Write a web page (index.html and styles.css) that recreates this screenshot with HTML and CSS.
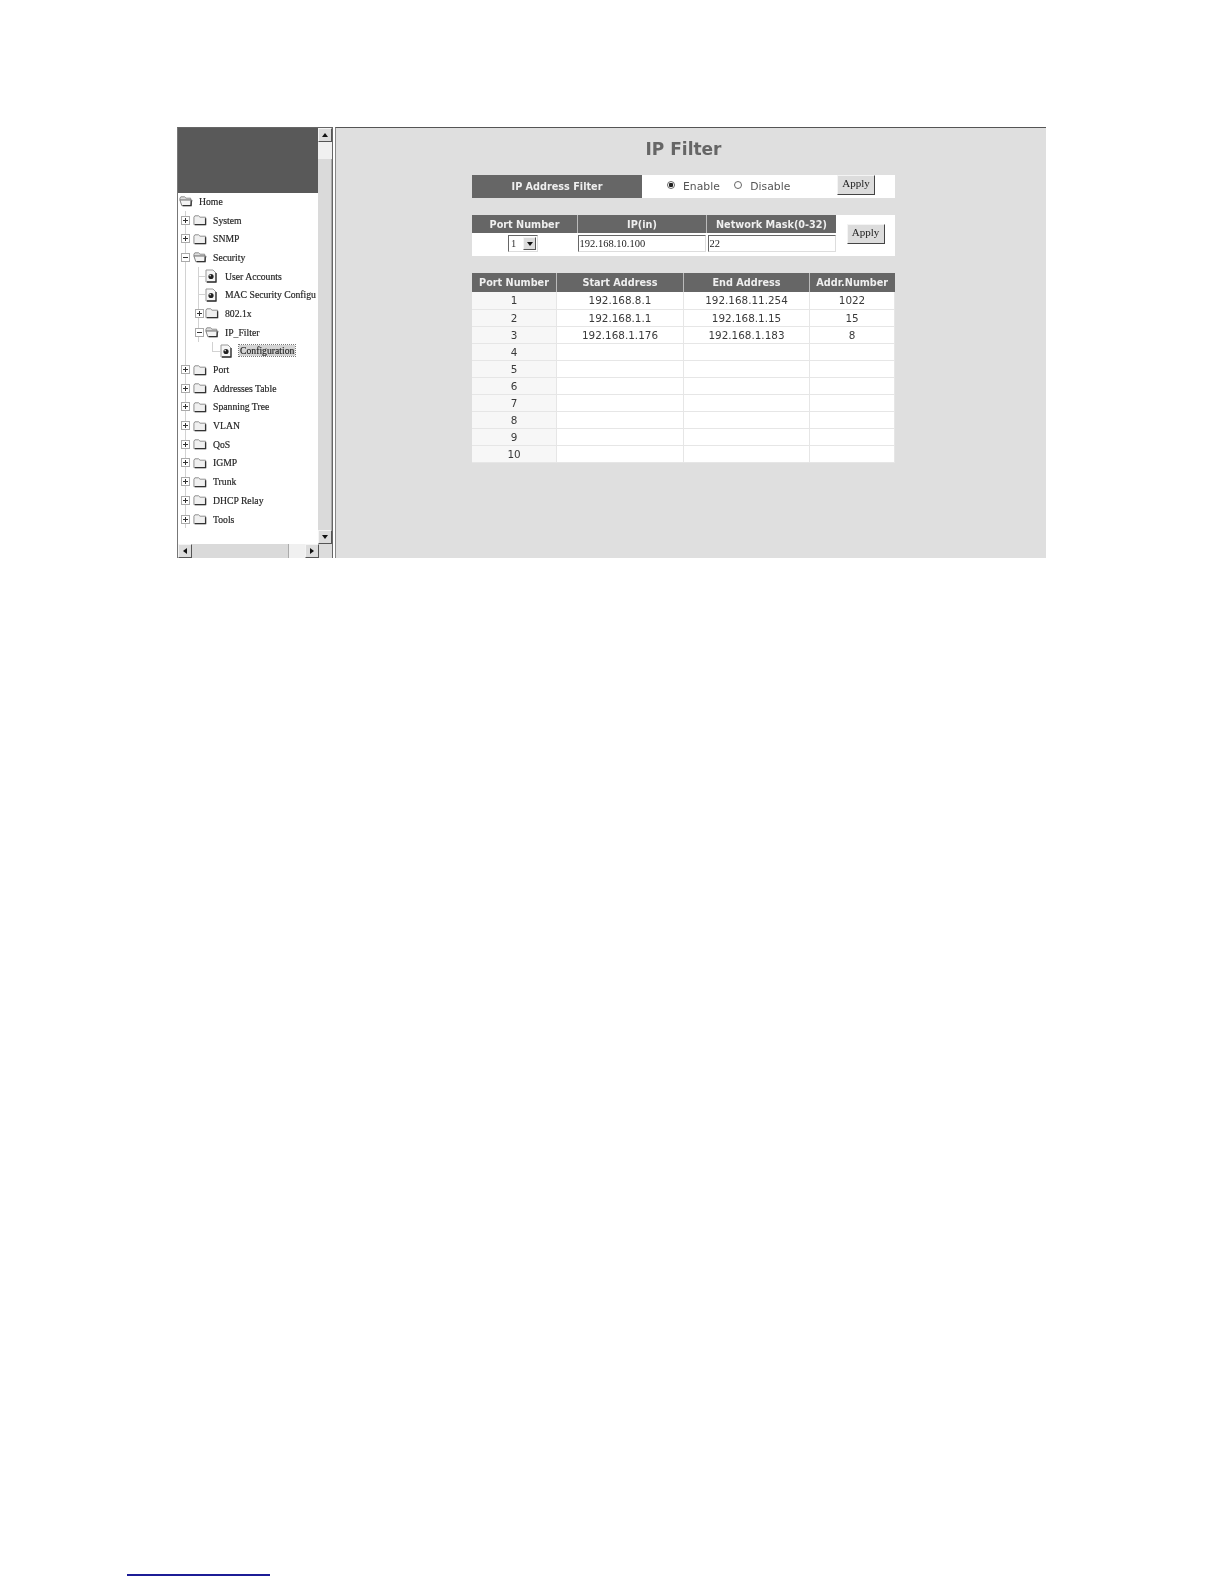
FILE: index.html
```html
<!DOCTYPE html>
<html lang="en">
<head>
    <meta charset="UTF-8">
    <title>IP Filter</title>
    <link rel="stylesheet" href="styles.css">
</head>
<body>
    <svg class="defs" width="0" height="0">
        <symbol id="folder" viewBox="0 0 15 12">
            <path d="M1 3 L2 1.5 H6 L7.5 3 H13.5 V11 H1 Z" fill="#f0f0f0" stroke="#888"/>
            <path d="M13.5 4 V11 H2" fill="none" stroke="#333" stroke-width="1.4"/>
        </symbol>
        <symbol id="folder-open" viewBox="0 0 15 12">
            <path d="M1 3 L2 1.5 H6 L7.5 3 H12.5 V5 H1 Z" fill="#ddd" stroke="#888"/>
            <path d="M1 5 H14 L12.5 11 H3 Z" fill="#f4f4f4" stroke="#777"/>
            <path d="M13 5.5 V11 H4" fill="none" stroke="#333" stroke-width="1.4"/>
        </symbol>
        <symbol id="doc" viewBox="0 0 12 14">
            <path d="M1 1 H8 L11 4 V13 H1 Z" fill="#f6f6f6" stroke="#999"/>
            <path d="M11 4 V13 H2" fill="none" stroke="#333" stroke-width="1.3"/>
            <circle cx="6" cy="7.5" r="2.6" fill="#222"/>
            <circle cx="5.2" cy="6.6" r="0.8" fill="#ddd"/>
        </symbol>
        <symbol id="plus" viewBox="0 0 9 9">
            <rect x="0.5" y="0.5" width="8" height="8" fill="#fff" stroke="#aaa"/>
            <path d="M2 4.5 H7 M4.5 2 V7" stroke="#333"/>
        </symbol>
        <symbol id="minus" viewBox="0 0 9 9">
            <rect x="0.5" y="0.5" width="8" height="8" fill="#fff" stroke="#aaa"/>
            <path d="M2 4.5 H7" stroke="#333"/>
        </symbol>
    </svg>

    <div class="shot">
        <!-- left menu frame -->
        <div class="menu">
            <div class="menu-body">
                <div class="menu-view">
                    <div class="banner"></div>
                    <ul class="tree">
                        <li class="row home"><svg class="ic-folder"><use href="#folder-open"/></svg><span>Home</span></li>
                        <li class="row lv1 line"><svg class="ic-box"><use href="#plus"/></svg><svg class="ic-folder"><use href="#folder"/></svg><span>System</span></li>
                        <li class="row lv1 line"><svg class="ic-box"><use href="#plus"/></svg><svg class="ic-folder"><use href="#folder"/></svg><span>SNMP</span></li>
                        <li class="row lv1 line"><svg class="ic-box"><use href="#minus"/></svg><svg class="ic-folder"><use href="#folder-open"/></svg><span>Security</span></li>
                        <li class="row lv2-leaf line line2"><svg class="ic-doc"><use href="#doc"/></svg><span>User Accounts</span></li>
                        <li class="row lv2-leaf line line2"><svg class="ic-doc"><use href="#doc"/></svg><span>MAC Security Configu</span></li>
                        <li class="row lv2 line line2"><svg class="ic-box"><use href="#plus"/></svg><svg class="ic-folder"><use href="#folder"/></svg><span>802.1x</span></li>
                        <li class="row lv2 line line2"><svg class="ic-box"><use href="#minus"/></svg><svg class="ic-folder"><use href="#folder-open"/></svg><span>IP_Filter</span></li>
                        <li class="row lv3-leaf line line3"><svg class="ic-doc"><use href="#doc"/></svg><span class="current">Configuration</span></li>
                        <li class="row lv1 line"><svg class="ic-box"><use href="#plus"/></svg><svg class="ic-folder"><use href="#folder"/></svg><span>Port</span></li>
                        <li class="row lv1 line"><svg class="ic-box"><use href="#plus"/></svg><svg class="ic-folder"><use href="#folder"/></svg><span>Addresses Table</span></li>
                        <li class="row lv1 line"><svg class="ic-box"><use href="#plus"/></svg><svg class="ic-folder"><use href="#folder"/></svg><span>Spanning Tree</span></li>
                        <li class="row lv1 line"><svg class="ic-box"><use href="#plus"/></svg><svg class="ic-folder"><use href="#folder"/></svg><span>VLAN</span></li>
                        <li class="row lv1 line"><svg class="ic-box"><use href="#plus"/></svg><svg class="ic-folder"><use href="#folder"/></svg><span>QoS</span></li>
                        <li class="row lv1 line"><svg class="ic-box"><use href="#plus"/></svg><svg class="ic-folder"><use href="#folder"/></svg><span>IGMP</span></li>
                        <li class="row lv1 line"><svg class="ic-box"><use href="#plus"/></svg><svg class="ic-folder"><use href="#folder"/></svg><span>Trunk</span></li>
                        <li class="row lv1 line"><svg class="ic-box"><use href="#plus"/></svg><svg class="ic-folder"><use href="#folder"/></svg><span>DHCP Relay</span></li>
                        <li class="row lv1 line"><svg class="ic-box"><use href="#plus"/></svg><svg class="ic-folder"><use href="#folder"/></svg><span>Tools</span></li>
                    </ul>
                </div>
                <div class="vbar">
                    <div class="sb-btn"><span class="arrow up"></span></div>
                    <div class="vtrack"></div>
                    <div class="vthumb"></div>
                    <div class="sb-btn"><span class="arrow down"></span></div>
                </div>
            </div>
            <div class="hbar">
                <div class="sb-btn"><span class="arrow left"></span></div>
                <div class="hthumb"></div>
                <div class="htrack"></div>
                <div class="sb-btn"><span class="arrow right"></span></div>
                <div class="corner"></div>
            </div>
        </div>

        <!-- main frame -->
        <div class="main">
            <h1>IP Filter</h1>

            <table class="grid enable-table">
                <tr>
                    <th class="c-label">IP Address Filter</th>
                    <td class="c-radios">
                        <span class="radio checked"></span><span class="radio-text">Enable</span>
                        <span class="radio"></span><span class="radio-text">Disable</span>
                    </td>
                    <td class="c-apply"><button type="button" class="apply">Apply</button></td>
                </tr>
            </table>

            <table class="grid edit-table">
                <tr>
                    <th class="c-port">Port Number</th>
                    <th class="c-ip">IP(in)</th>
                    <th class="c-mask">Network Mask(0-32)</th>
                    <td class="c-side" rowspan="2"><button type="button" class="apply">Apply</button></td>
                </tr>
                <tr class="edit-row">
                    <td>
                        <div class="select"><span class="select-val">1</span><span class="sb-btn"><span class="arrow down"></span></span></div>
                    </td>
                    <td><input type="text" class="field" value="192.168.10.100"></td>
                    <td><input type="text" class="field field-mask" value="22"></td>
                </tr>
            </table>

            <table class="grid list-table">
                <thead>
                    <tr>
                        <th class="l-port">Port Number</th>
                        <th class="l-start">Start Address</th>
                        <th class="l-end">End Address</th>
                        <th class="l-num">Addr.Number</th>
                    </tr>
                </thead>
                <tbody>
                    <tr><td class="first">1</td><td>192.168.8.1</td><td>192.168.11.254</td><td>1022</td></tr>
                    <tr><td class="first">2</td><td>192.168.1.1</td><td>192.168.1.15</td><td>15</td></tr>
                    <tr><td class="first">3</td><td>192.168.1.176</td><td>192.168.1.183</td><td>8</td></tr>
                    <tr><td class="first">4</td><td></td><td></td><td></td></tr>
                    <tr><td class="first">5</td><td></td><td></td><td></td></tr>
                    <tr><td class="first">6</td><td></td><td></td><td></td></tr>
                    <tr><td class="first">7</td><td></td><td></td><td></td></tr>
                    <tr><td class="first">8</td><td></td><td></td><td></td></tr>
                    <tr><td class="first">9</td><td></td><td></td><td></td></tr>
                    <tr><td class="first">10</td><td></td><td></td><td></td></tr>
                </tbody>
            </table>
        </div>
    </div>

    <div class="footnote-rule"></div>
</body>
</html>
```
FILE: styles.css
```css
/* Page */
html, body {
    margin: 0;
    padding: 0;
    background: #fff;
}
body {
    width: 1224px;
    height: 1584px;
    overflow: hidden;
    padding-top: 127px;
    box-sizing: border-box;
}
.defs {
    display: block;
    height: 0;
}
.shot {
    display: flex;
    width: 869px;
    height: 431px;
    margin-left: 177px;
    filter: blur(0.55px);
}
.footnote-rule {
    width: 143px;
    height: 2px;
    margin: 1016px 0 0 127px;
    background: #1c1c96;
}

/* Left frame */
.menu {
    width: 156px;
    flex: none;
    display: flex;
    flex-direction: column;
    box-sizing: border-box;
    border-top: 1px solid #666;
    border-left: 1px solid #777;
    border-right: 1px solid #666;
    background: #fff;
}
.menu-body {
    flex: 1;
    display: flex;
    min-height: 0;
}
.menu-view {
    width: 140px;
    flex: none;
    overflow: hidden;
}
.banner {
    height: 65px;
    background: #595959;
}
.tree {
    list-style: none;
    margin: 0;
    padding: 0;
    font: 9.7px "Liberation Serif", serif;
    color: #222;
    -webkit-text-stroke: 0.2px #333;
}
.row {
    display: flex;
    align-items: center;
    height: 18.7px;
    white-space: nowrap;
    background-repeat: no-repeat;
}
.row svg {
    flex: none;
}
.ic-box {
    width: 9px;
    height: 9px;
}
.ic-folder {
    width: 14px;
    height: 12px;
    margin: 0 6px 0 3px;
}
.ic-doc {
    width: 12px;
    height: 14px;
    margin-right: 8px;
}
.home {
    padding-left: 1px;
    margin-top: -1px;
}
.home .ic-folder {
    margin: 0 6px 0 0;
}
.lv1 {
    padding-left: 3px;
}
.lv2 {
    padding-left: 17px;
}
.lv2 .ic-folder {
    margin-left: 1px;
}
.lv2-leaf {
    padding-left: 27px;
}
.lv3-leaf {
    padding-left: 42px;
}
.lv3-leaf .ic-doc {
    margin-right: 7px;
}
/* tree connector lines */
.line {
    background-image: linear-gradient(#d2d2d2, #d2d2d2);
    background-size: 1px 100%;
    background-position: 7px 0;
}
.line2 {
    background-image: linear-gradient(#d2d2d2, #d2d2d2), linear-gradient(#d2d2d2, #d2d2d2);
    background-size: 1px 100%, 1px 100%;
    background-position: 7px 0, 20px 0;
}
.lv2-leaf.line2 {
    background-image: linear-gradient(#d2d2d2, #d2d2d2), linear-gradient(#d2d2d2, #d2d2d2), linear-gradient(#d2d2d2, #d2d2d2);
    background-size: 1px 100%, 1px 100%, 7px 1px;
    background-position: 7px 0, 20px 0, 20px 9px;
}
.line3 {
    background-image: linear-gradient(#d2d2d2, #d2d2d2), linear-gradient(#d2d2d2, #d2d2d2), linear-gradient(#d2d2d2, #d2d2d2);
    background-size: 1px 100%, 1px 50%, 8px 1px;
    background-position: 7px 0, 34px 0, 34px 9px;
}
.current {
    background: #d4d4d4;
    outline: 1px dotted #777;
    padding: 0 1px;
    line-height: 11px;
}

/* Scrollbars */
.vbar {
    width: 14px;
    flex: none;
    display: flex;
    flex-direction: column;
    background: #f0f0f0;
}
.sb-btn {
    width: 14px;
    height: 14px;
    flex: none;
    box-sizing: border-box;
    display: flex;
    align-items: center;
    justify-content: center;
    background: #dcdcdc;
    border: 1px solid;
    border-color: #f4f4f4 #555 #555 #f4f4f4;
}
.vtrack {
    height: 17px;
    flex: none;
}
.vthumb {
    flex: 1;
    background: #dadada;
    border-right: 1px solid #aaa;
}
.hbar {
    height: 14px;
    flex: none;
    display: flex;
    background: #f0f0f0;
}
.hthumb {
    width: 96px;
    flex: none;
    background: #dadada;
    border-right: 1px solid #aaa;
}
.htrack {
    width: 16px;
    flex: none;
}
.corner {
    flex: 1;
    background: #dcdcdc;
}
.arrow {
    width: 0;
    height: 0;
    border: 3px solid transparent;
}
.arrow.up {
    border-bottom: 4px solid #111;
    border-top-width: 0;
}
.arrow.down {
    border-top: 4px solid #111;
    border-bottom-width: 0;
}
.arrow.left {
    border-right: 4px solid #111;
    border-left-width: 0;
}
.arrow.right {
    border-left: 4px solid #111;
    border-right-width: 0;
}

/* Main frame */
.main {
    flex: 1;
    margin-left: 2px;
    padding-right: 15px;
    box-sizing: border-box;
    background: #dfdfdf;
    border-top: 1px solid #555;
    border-left: 1px solid #888;
    font-family: "DejaVu Sans", sans-serif;
    color: #333;
}
h1 {
    margin: 10px 0 0;
    height: 37px;
    text-align: center;
    font-size: 17px;
    line-height: 22px;
    font-weight: bold;
    color: #666;
}
.grid {
    width: 423px;
    margin: 0 auto;
    table-layout: fixed;
    border-collapse: collapse;
    background: #fff;
}
.grid th {
    padding: 0;
    background: #666;
    color: #efefef;
    font-size: 9.7px;
    font-weight: bold;
    text-align: center;
    border-right: 1px solid #bbb;
}
.grid td {
    padding: 0;
}

/* Enable row */
.enable-table {
    height: 23px;
}
.c-label {
    width: 170px;
    border-right: 0 !important;
}
.c-radios {
    width: 195px;
    font-size: 10.8px;
    color: #555;
    padding-left: 25px !important;
    box-sizing: border-box;
}
.c-apply {
    width: 58px;
    vertical-align: top;
}
.radio {
    display: inline-block;
    width: 8px;
    height: 8px;
    box-sizing: border-box;
    border: 1px solid #666;
    border-radius: 50%;
    margin-right: 8px;
    vertical-align: 1px;
}
.radio.checked {
    background: radial-gradient(circle, #222 0 2px, #fff 2.5px);
}
.radio-text {
    margin-right: 11px;
}
.apply {
    height: 20px;
    width: 38px;
    padding: 0 0 4px;
    box-sizing: border-box;
    background: #dcdcdc;
    border: 1px solid;
    border-color: #f4f4f4 #444 #444 #f4f4f4;
    border-radius: 0;
    font: 11px "Liberation Serif", serif;
    color: #222;
}
.enable-table .apply {
    display: block;
}

/* Edit row */
.edit-table {
    margin-top: 17px;
    height: 41px;
}
.c-port {
    width: 105px;
}
.c-ip {
    width: 128px;
}
.c-mask {
    width: 129px;
    border-right: 0 !important;
}
.edit-table tr:first-child {
    height: 18px;
}
.edit-table .edit-row td {
    vertical-align: top;
    padding-top: 2px;
}
.grid td.c-side {
    text-align: center;
    vertical-align: top;
    padding-top: 9px;
}
.c-side .apply {
    display: block;
    margin: 0 auto;
}
.select {
    display: flex;
    align-items: center;
    justify-content: space-between;
    width: 30px;
    height: 17px;
    margin-left: 36px;
    box-sizing: border-box;
    padding-right: 1px;
    border: 1px solid;
    border-color: #666 #ddd #ddd #666;
    font: 10.5px "Liberation Serif", serif;
}
.select-val {
    padding-left: 2px;
}
.select .sb-btn {
    width: 13px;
    height: 13px;
}
.field {
    display: block;
    width: 128px;
    height: 17px;
    margin: 0;
    padding: 0 1px;
    box-sizing: border-box;
    background: #fff;
    border: 1px solid;
    border-color: #666 #ddd #ddd #666;
    border-radius: 0;
    font: 10.5px "Liberation Serif", serif;
    color: #222;
}
.field-mask {
    margin-left: 1px;
}

/* Port list */
.list-table {
    margin-top: 17px;
}
.list-table thead tr {
    height: 19px;
}
.l-port {
    width: 84px;
}
.l-start {
    width: 126px;
}
.l-end {
    width: 125px;
}
.l-num {
    border-right: 0 !important;
}
.list-table td {
    height: 16px;
    text-align: center;
    font-size: 10.4px;
    line-height: 15px;
    color: #3a3a3a;
    border-right: 1px solid #e6e6e6;
    border-bottom: 1px solid #e6e6e6;
}
.list-table tbody tr:first-child td {
    height: 17px;
}
.list-table td.first {
    background: #f7f7f7;
}
```
